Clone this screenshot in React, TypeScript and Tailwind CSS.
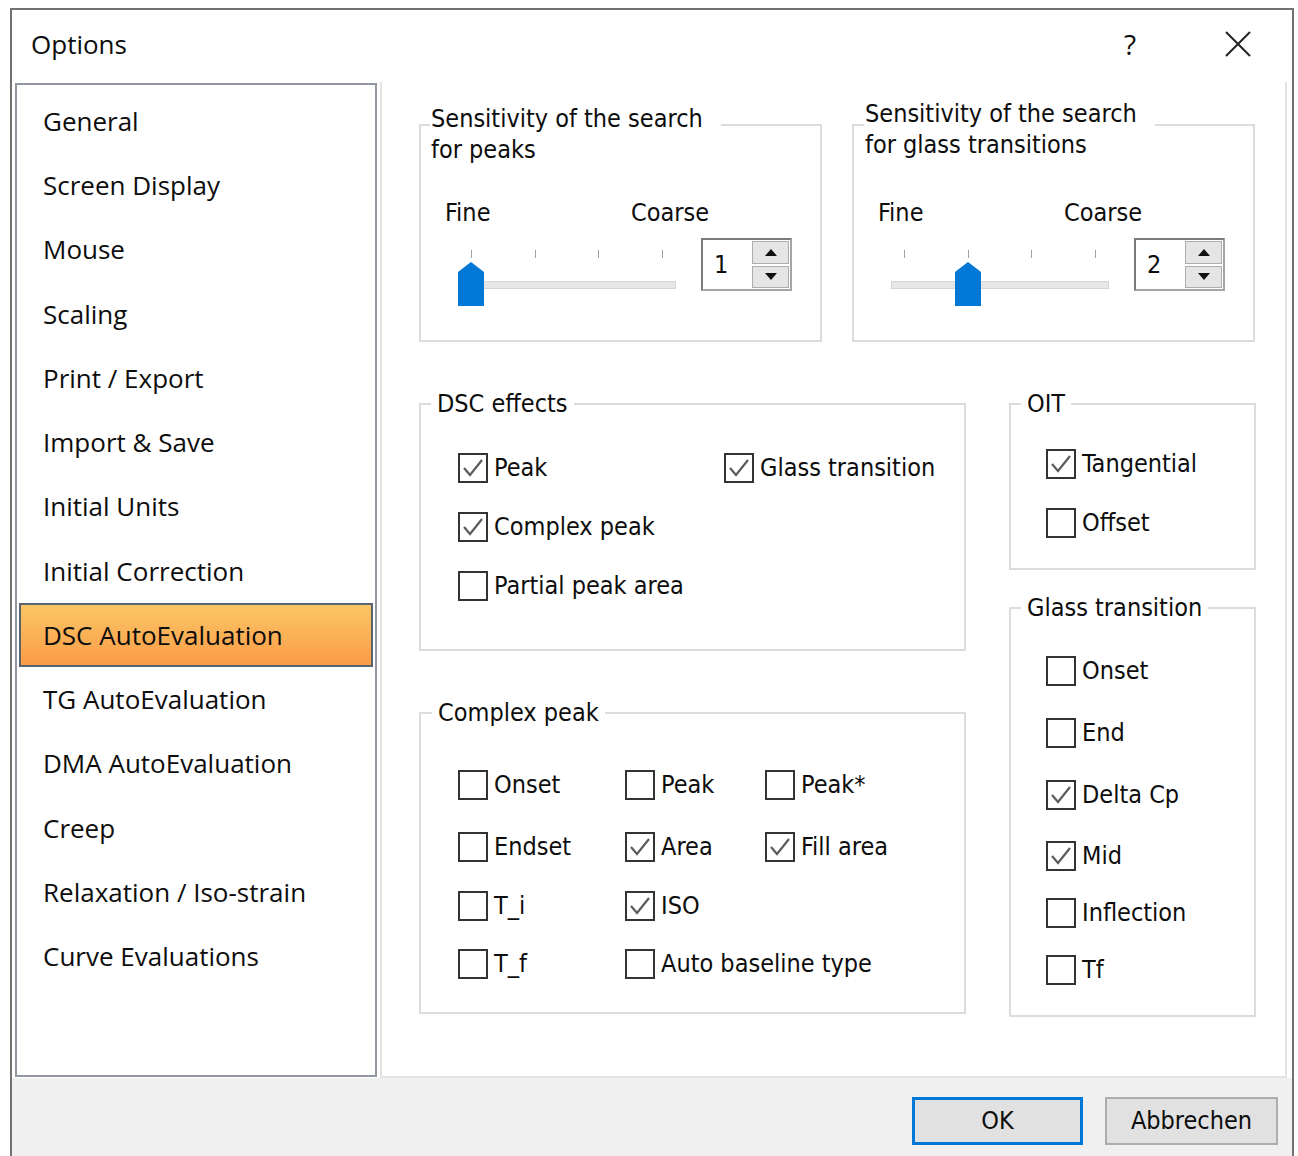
import React from "react";
import clsx from "clsx";

const pages = [
  "General",
  "Screen Display",
  "Mouse",
  "Scaling",
  "Print / Export",
  "Import & Save",
  "Initial Units",
  "Initial Correction",
  "DSC AutoEvaluation",
  "TG AutoEvaluation",
  "DMA AutoEvaluation",
  "Creep",
  "Relaxation / Iso-strain",
  "Curve Evaluations",
];

function Check({ on, label }: { on?: boolean; label: string }) {
  return (
    <div className="flex items-center">
      <span className="w-[30px] h-[30px] border-2 border-[#333333] bg-white flex items-center justify-center shrink-0">
        {on && (
          <svg width="24" height="24" viewBox="0 0 24 24">
            <polyline
              points="3,12 9,19 21,4"
              fill="none"
              stroke="#5c5c5c"
              strokeWidth="2.2"
            />
          </svg>
        )}
      </span>
      <span className="ml-[6px]">{label}</span>
    </div>
  );
}

function GroupBox({
  title,
  legendClass,
  className,
  children,
}: {
  title: React.ReactNode;
  legendClass: string;
  className: string;
  children?: React.ReactNode;
}) {
  return (
    <div className={clsx("relative border-2 border-[#dcdcdc]", className)}>
      <div className={clsx("absolute bg-white leading-[31px]", legendClass)}>
        {title}
      </div>
      {children}
    </div>
  );
}

function SpinBox({ value }: { value: number }) {
  return (
    <div className="flex w-[91px] h-[53px] border-2 border-[#a5a5a5] border-t-[#7a7a7a] border-l-[#7a7a7a] bg-white">
      <div className="flex-1 flex items-center pl-[11px]">{value}</div>
      <div className="flex flex-col gap-[2px] py-[1px] pr-[1px] w-[38px]">
        <button className="flex-1 border border-[#adadad] bg-[#e5e5e5] flex items-center justify-center">
          <svg width="12" height="7" viewBox="0 0 12 7">
            <polygon points="0,7 6,0 12,7" fill="#111" />
          </svg>
        </button>
        <button className="flex-1 border border-[#adadad] bg-[#e5e5e5] flex items-center justify-center">
          <svg width="12" height="7" viewBox="0 0 12 7">
            <polygon points="0,0 12,0 6,7" fill="#111" />
          </svg>
        </button>
      </div>
    </div>
  );
}

function Sensitivity({ value }: { value: number }) {
  return (
    <div className="flex pl-[24px] pt-[71px]">
      <div className="w-[256px] shrink-0">
        <div className="flex leading-[31px] whitespace-nowrap">
          <span className="w-[186px] shrink-0">Fine</span>
          <span>Coarse</span>
        </div>
        {/* trackbar: ticks, groove and thumb */}
        <div className="relative ml-[13px] mt-[22px] w-[218px] h-[56px]">
          <div className="flex justify-between px-[13px]">
            <span className="w-px h-[8px] bg-[#a0a0a0]" />
            <span className="w-px h-[8px] bg-[#a0a0a0]" />
            <span className="w-px h-[8px] bg-[#a0a0a0]" />
            <span className="w-px h-[8px] bg-[#a0a0a0]" />
          </div>
          <div className="mt-[23px] h-[8px] bg-[#e7e7e7] border border-[#d6d6d6]" />
          <svg
            width="26"
            height="44"
            viewBox="0 0 26 44"
            className="absolute top-[12px]"
            style={{ left: (value - 1) * 64 }}
          >
            <polygon points="0,10 13,0 26,10 26,44 0,44" fill="#0078d7" />
          </svg>
        </div>
      </div>
      <div className="mt-[41px]">
        <SpinBox value={value} />
      </div>
    </div>
  );
}

export default function App() {
  return (
    <div className="w-[1298px] h-[1156px] bg-white pt-[8px] pl-[10px] overflow-hidden text-[#0d0d0d]">
      <div className="w-[1284px] h-[1148px] border-2 border-b-0 border-[#727272] bg-white flex flex-col">
        {/* title bar */}
        <div className="h-[72px] flex items-center pl-[19px] pr-[41px] pb-[4px] font-['Open_Sans',sans-serif] text-[26px]">
          <span className="flex-1">Options</span>
          <span className="mr-[89px] text-[28px] font-medium">?</span>
          <svg width="26" height="26" viewBox="0 0 26 26">
            <path d="M1 1 L25 25 M25 1 L1 25" stroke="#222" strokeWidth="2" />
          </svg>
        </div>

        <div className="flex h-[996px]">
          {/* page list */}
          <div className="ml-[3px] mt-[1px] w-[362px] h-[994px] border-2 border-[#9196a0] bg-white pt-[4px] font-['Open_Sans',sans-serif] text-[26px]">
            {pages.map((p, i) =>
              i === 8 ? (
                <div
                  key={p}
                  className="mx-[2px] h-[64px] flex items-center pl-[22px] border-2 border-[#5a6370] bg-linear-to-b from-[#f9c666] to-[#fb9b47]"
                >
                  {p}
                </div>
              ) : (
                <div key={p} className="h-[64.3px] flex items-center pl-[26px]">
                  {p}
                </div>
              )
            )}
          </div>

          {/* settings page */}
          <div className="ml-[3px] w-[907px] h-[996px] border-2 border-t-0 border-[#e3e3e3] bg-white pl-[37px] pt-[42px] font-['DejaVu_Sans_Condensed','DejaVu_Sans',sans-serif] font-stretch-condensed text-[25px]">
            <div className="flex gap-[30px]">
              <GroupBox
                title={
                  <>
                    Sensitivity of the search
                    <br />
                    for peaks
                  </>
                }
                legendClass="top-[-23px] left-[9px] pl-[1px] pr-[18px]"
                className="w-[403px] h-[218px]"
              >
                <Sensitivity value={1} />
              </GroupBox>
              <GroupBox
                title={
                  <>
                    Sensitivity of the search
                    <br />
                    for glass transitions
                  </>
                }
                legendClass="top-[-28px] left-[10px] pl-[1px] pr-[18px]"
                className="w-[403px] h-[218px]"
              >
                <Sensitivity value={2} />
              </GroupBox>
            </div>

            <div className="flex mt-[61px] gap-[43px]">
              <div className="flex flex-col gap-[61px]">
                <GroupBox
                  title="DSC effects"
                  legendClass="top-[-17px] left-[10px] px-[6px]"
                  className="w-[547px] h-[248px]"
                >
                  <div className="grid grid-cols-[266px_1fr] auto-rows-[59px] items-center pl-[37px] pt-[33px]">
                    <Check on label="Peak" />
                    <Check on label="Glass transition" />
                    <Check on label="Complex peak" />
                    <div />
                    <Check label="Partial peak area" />
                  </div>
                </GroupBox>
                <GroupBox
                  title="Complex peak"
                  legendClass="top-[-17px] left-[11px] px-[6px]"
                  className="w-[547px] h-[302px]"
                >
                  <div className="grid grid-cols-[167px_140px_1fr] grid-rows-[62px_62px_56px_60px] items-center pl-[37px] pt-[40px]">
                    <Check label="Onset" />
                    <Check label="Peak" />
                    <Check label="Peak*" />
                    <Check label="Endset" />
                    <Check on label="Area" />
                    <Check on label="Fill area" />
                    <Check label="T_i" />
                    <Check on label="ISO" />
                    <div />
                    <Check label="T_f" />
                    <div className="col-span-2">
                      <Check label="Auto baseline type" />
                    </div>
                  </div>
                </GroupBox>
              </div>

              <div className="flex flex-col gap-[37px]">
                <GroupBox
                  title="OIT"
                  legendClass="top-[-17px] left-[10px] px-[6px]"
                  className="w-[247px] h-[167px]"
                >
                  <div className="grid auto-rows-[59px] items-center pl-[35px] pt-[29px]">
                    <Check on label="Tangential" />
                    <Check label="Offset" />
                  </div>
                </GroupBox>
                <GroupBox
                  title="Glass transition"
                  legendClass="top-[-17px] left-[10px] px-[6px]"
                  className="w-[247px] h-[410px]"
                >
                  <div className="grid grid-rows-[62px_62px_62px_60px_54px_60px] items-center pl-[35px] pt-[31px]">
                    <Check label="Onset" />
                    <Check label="End" />
                    <Check on label="Delta Cp" />
                    <Check on label="Mid" />
                    <Check label="Inflection" />
                    <Check label="Tf" />
                  </div>
                </GroupBox>
              </div>
            </div>
          </div>
        </div>

        {/* dialog buttons */}
        <div className="flex-1 bg-[#f0f0f0] flex justify-end items-start gap-[22px] pt-[19px] pr-[14px] font-['DejaVu_Sans_Condensed','DejaVu_Sans',sans-serif] font-stretch-condensed text-[25px]">
          <button className="w-[171px] h-[48px] border-[3px] border-[#0078d7] bg-[#e1e1e1]">
            OK
          </button>
          <button className="w-[173px] h-[48px] border-2 border-[#adadad] bg-[#e1e1e1]">
            Abbrechen
          </button>
        </div>
      </div>
    </div>
  );
}
